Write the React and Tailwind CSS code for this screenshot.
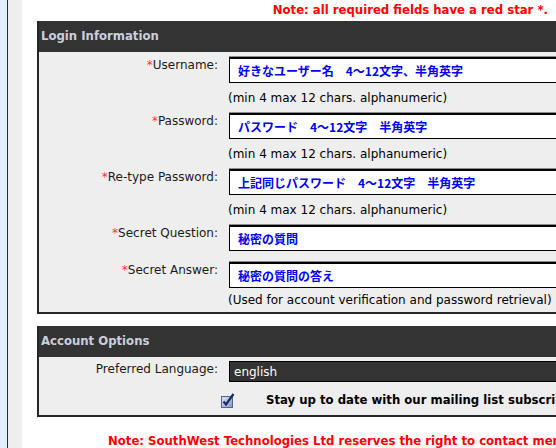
import React from 'react';

const fields = [
  { label: 'Username:', value: '好きなユーザー名　4～12文字、半角英字', hint: '(min 4 max 12 chars. alphanumeric)' },
  { label: 'Password:', value: 'パスワード　4～12文字　半角英字', hint: '(min 4 max 12 chars. alphanumeric)' },
  { label: 'Re-type Password:', value: '上記同じパスワード　4～12文字　半角英字', hint: '(min 4 max 12 chars. alphanumeric)' },
  { label: 'Secret Question:', value: '秘密の質問', gap: true },
  { label: 'Secret Answer:', value: '秘密の質問の答え', hint: '(Used for account verification and password retrieval)', last: true },
];

function Label({ children, star }) {
  return (
    <div className="w-[180px] shrink-0 text-right pr-[1px] -mt-[1px] text-[#1a1a1a]">
      {star && <span className="text-[#ff3333]">*</span>}
      {children}
    </div>
  );
}

function Field({ f }) {
  return (
    <div>
      <div className="flex items-start">
        <Label star>{f.label}</Label>
        <div className="ml-[10px] h-[26px] w-[400px] bg-white border border-black border-t-2 shadow-[0_-1px_0_#8a8a8a] flex items-center pl-[8px]">
          <span className="text-[12px] font-bold text-[#0000ee]" style={{ fontFamily: '"Noto Sans CJK JP", sans-serif' }}>
            {f.value}
          </span>
        </div>
      </div>
      {f.hint && (
        <div className={`flex items-center pl-[189px] ${f.last ? 'h-[24px]' : 'h-[30px]'}`}>
          {f.hint}
        </div>
      )}
      {f.gap && <div className="h-[11px]" />}
    </div>
  );
}

function CheckIcon() {
  return (
    <svg width="14" height="16" viewBox="0 0 14 16">
      <defs>
        <linearGradient id="cb" x1="0" y1="0" x2="1" y2="1">
          <stop offset="0" stopColor="#e4e9f5" />
          <stop offset="1" stopColor="#8294c4" />
        </linearGradient>
      </defs>
      <rect x="0.5" y="3.5" width="11" height="11" fill="url(#cb)" stroke="#55658f" />
      <path d="M2.5 8.5 L5 11.5 L12.5 1" fill="none" stroke="#1b2a68" strokeWidth="2.2" />
    </svg>
  );
}

export default function App() {
  return (
    <div className="w-[556px] h-[448px] overflow-hidden flex bg-white text-[12px] text-black" style={{ fontFamily: '"DejaVu Sans", Verdana, sans-serif' }}>
      <div className="w-[7px] shrink-0 bg-[#e1efff]" />
      <div className="w-px shrink-0 bg-[#2a2a2a]" />
      <div className="w-[14px] shrink-0 bg-[#eeeeee]" />
      <div className="flex-1 pl-[15px] min-w-0">
        <div className="w-[511px] h-[21px] flex items-center justify-end pt-[1px] text-[11.7px] font-bold text-[#ff0000]">
          Note: all required fields have a red star *.
        </div>

        <div className="w-[620px] border-2 border-[#262626] bg-[#eeeeee]">
          <div className="h-[31px] -mt-[2px] bg-[#333333] flex items-center pl-[2px] pt-[1px] text-[11.7px] font-bold text-[#c9d0dc]">
            Login Information
          </div>
          <div className="pt-[5px]">
            {fields.map((f) => (
              <Field key={f.label} f={f} />
            ))}
          </div>
        </div>

        <div className="w-[620px] mt-[12px] border-2 border-[#262626] bg-[#eeeeee]">
          <div className="h-[31px] -mt-[2px] bg-[#333333] flex items-center pl-[2px] pt-[1px] text-[11.7px] font-bold text-[#c9d0dc]">
            Account Options
          </div>
          <div className="pt-[4px]">
            <div className="flex items-start">
              <Label>Preferred Language:</Label>
              <div className="ml-[10px] h-[21px] w-[400px] bg-[#333333] border border-black flex items-center pl-[4px] text-white">
                english
              </div>
            </div>
            <div className="flex items-center h-[33px] pt-[5px] pl-[182px]">
              <CheckIcon />
              <span className="ml-[31px] text-[11.7px] font-bold">Stay up to date with our mailing list subscription</span>
            </div>
          </div>
        </div>

        <div className="pl-[71px] mt-[16px] text-[11.7px] font-bold text-[#ff0000] whitespace-nowrap">
          Note: SouthWest Technologies Ltd reserves the right to contact members
        </div>
      </div>
    </div>
  );
}
